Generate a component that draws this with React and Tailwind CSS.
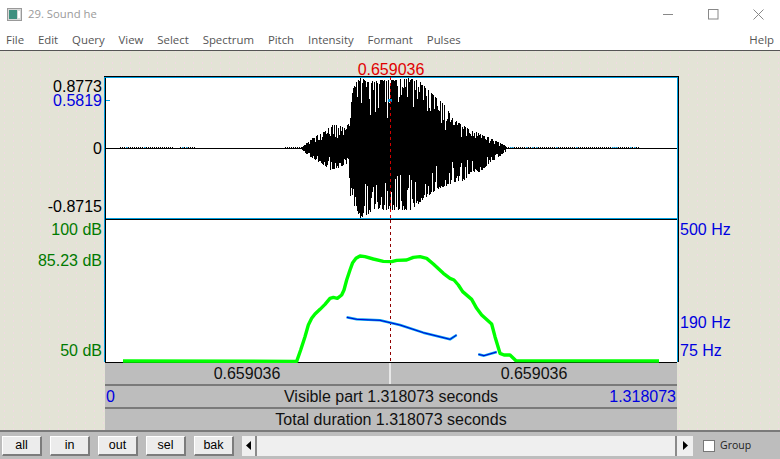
import React from "react";

const env = (pts, x) => {
  for (let i = 1; i < pts.length; i++) {
    if (x <= pts[i][0]) {
      const [a, b] = pts[i - 1], [c, d] = pts[i];
      return b + ((d - b) * (x - a)) / (c - a || 1);
    }
  }
  return 148;
};
const topE = [[105,148],[301,148],[304,145],[310,140],[315,136],[325,131],[333,124],[345,128],[349,122],[351,100],[353,86],[356,82],[361,77],[366,82],[380,80],[395,80],[410,78],[420,82],[432,94],[445,106],[452,118],[460,124],[470,130],[480,134],[490,138],[498,142],[506,146],[677,148]];
const botE = [[105,148],[301,149],[304,152],[310,157],[320,163],[330,170],[340,167],[348,163],[350,196],[355,208],[360,218],[365,216],[375,208],[385,210],[400,210],[410,210],[425,198],[435,190],[445,186],[455,182],[465,180],[470,172],[480,172],[490,162],[500,156],[506,151],[677,149]];
const rnd = (i) => {
  const s = Math.sin(i * 12.9898) * 43758.5453;
  return s - Math.floor(s);
};
let wave = "";
for (let x = 301; x < 506; x++) {
  const t = env(topE, x), b = env(botE, x);
  const r1 = rnd(x), r2 = rnd(x + 99);
  const up = t + (x % 4 === 0 ? 0 : r1 * r1 * r1 * (148 - t) * 0.6);
  const dn = b - (x % 4 === 2 ? 0 : r2 * r2 * r2 * (b - 148) * 0.6);
  wave += `M${x + 0.5} ${Math.min(up, 147.5)}V${Math.max(dn, 149)}`;
}
let noise = "", noiseBlue = "";
const addNoise = (a, b) => {
  for (let x = a; x < b; x += 2) {
    if (rnd(x + 7) < 0.15) noiseBlue += `M${x} 147.5h1.5`;
    else noise += `M${x} 147.5h1`;
  }
};
addNoise(120, 174); addNoise(180, 196); addNoise(285, 302); addNoise(506, 640);

const map = (a) => a.map(([x, y]) => `${280 + x / 3},${240 + y / 3}`).join(" ");
const green = "123,361 " + map([[50,364],[62,330],[75,290],[85,255],[95,235],[105,222],[120,208],[135,193],[150,175],[160,172],[172,175],[185,165],[192,150],[200,120],[210,90],[218,68],[228,55],[240,48],[255,50],[280,57],[310,64],[335,65],[350,61],[380,60],[400,52],[420,50],[440,55],[460,72],[490,100],[510,115],[522,120],[535,135],[548,155],[575,178],[590,205],[605,225],[635,252],[645,290],[660,340],[672,345],[690,345],[708,362]]) + " 659,361";
const p1 = map([[200,232],[230,238],[300,241],[360,255],[430,278],[510,298],[530,285]]);
const p2 = map([[595,343],[612,347],[650,336]]);

const Label = ({ y, right, className, children }) => (
  <span
    style={{ top: y - 6 }}
    className={`absolute h-[14px] leading-[14px] whitespace-nowrap text-[16px] ${right ? "left-[3px]" : "right-[3px]"} ${className}`}
  >
    {children}
  </span>
);

const Row = ({ children, className = "" }) => (
  <div className={`h-[23px] shrink-0 bg-[#bdbdbd] border-b-2 border-[#7a7a7a] flex items-center text-[16px] leading-[18px] text-[#111] ${className}`}>
    {children}
  </div>
);

const Btn = ({ children }) => (
  <button className="w-[40px] h-[20px] bg-[#ececec] border-t border-l border-t-white border-l-white border-b-2 border-r-2 border-b-[#7c7c7c] border-r-[#7c7c7c] text-[12.5px] text-black leading-none flex items-center justify-center">
    {children}
  </button>
);

export default function App() {
  return (
    <div className="w-[780px] h-[459px] overflow-hidden flex flex-col bg-[#e3e3d6] bg-[radial-gradient(circle,#f0dae2_1px,transparent_1px)] bg-[length:9px_6px] font-['Liberation_Sans',sans-serif]">
      <div className="h-[31px] bg-white flex items-center pl-[7px] pr-[16px] pb-[2px] font-['Open_Sans',sans-serif]">
        <svg width="15" height="14" viewBox="0 0 15 14">
          <rect x="0.5" y="0.5" width="14" height="12" fill="#d8d8d8" stroke="#999" />
          <rect x="2" y="2" width="8" height="9" fill="#3f8f7f" />
          <rect x="11" y="3" width="2" height="7" fill="#fff" />
        </svg>
        <span className="ml-[6px] text-[11.3px] text-[#9a9a9a]">29. Sound he</span>
        <div className="ml-auto flex items-center gap-[34px]">
          <svg width="11" height="11" viewBox="0 0 11 11"><path d="M0 5.5H10" stroke="#888" fill="none" /></svg>
          <svg width="11" height="11" viewBox="0 0 11 11"><rect x="0.5" y="0.5" width="9.5" height="9.5" stroke="#888" fill="none" /></svg>
          <svg width="11" height="11" viewBox="0 0 11 11"><path d="M0.5 0.5L10.5 10.5M10.5 0.5L0.5 10.5" stroke="#888" fill="none" /></svg>
        </div>
      </div>
      <div className="h-[20px] bg-white border-b border-[#555] flex items-start pl-[6px] pr-[6px] text-[11.4px] leading-[17px] text-[#555] font-['Open_Sans',sans-serif]">
        <div className="flex gap-[13.9px]">
          {["File", "Edit", "Query", "View", "Select", "Spectrum", "Pitch", "Intensity", "Formant", "Pulses"].map((m) => (
            <span key={m}>{m}</span>
          ))}
        </div>
        <span className="ml-auto">Help</span>
      </div>
      <div className="flex-1 min-h-0 flex">
        <div className="w-[105px] relative -mt-[51px]">
          <Label y={86} className="text-black">0.8773</Label>
          <Label y={100} className="text-[#0000e0]">0.5819</Label>
          <Label y={148} className="text-black">0</Label>
          <Label y={206} className="text-black">-0.8715</Label>
          <Label y={229} className="text-[#007a00]">100 dB</Label>
          <Label y={260} className="text-[#007a00]">85.23 dB</Label>
          <Label y={350} className="text-[#007a00]">50 dB</Label>
        </div>
        <div className="w-[572px] flex flex-col pt-[26px]">
          <div className="relative h-[285px] shrink-0 bg-white">
            <span className="absolute -top-[14px] left-0 right-0 text-center text-[16px] leading-[13px] h-[13px] text-[#e00000]">0.659036</span>
            <svg className="absolute left-0 top-0 overflow-visible" width="572" height="285" viewBox="105 77 572 285">
              <path d="M104 76.5H679M104 219.5H677" stroke="#000" />
              <path d="M105 77.5H677M105 218.5H677" stroke="#00a0e0" />
              <path d="M104.5 77V362M677.5 77V362" stroke="#00a0e0" />
              <path d="M105.5 78V362M678.5 77V362" stroke="#000" />
              <path d="M106 100.5H110" stroke="#00a0e0" />
              <path d={wave} stroke="#000" strokeWidth="1" fill="none" shapeRendering="crispEdges" />
              <path d="M106 148.5H677" stroke="#000" strokeWidth="1" />
              <path d={noise} stroke="#000" />
              <path d={noiseBlue} stroke="#0090d0" />
              <path d="M388 100.5H392" stroke="#0090d0" strokeWidth="3" />
              <path d="M390.5 77V218" stroke="#d00000" strokeDasharray="3 3" />
              <path d="M390.5 220V362" stroke="#900000" strokeDasharray="3 3" />
              <polyline points={green} fill="none" stroke="#00ff00" strokeWidth="3.4" strokeLinejoin="round" />
              <polyline points={p1} fill="none" stroke="#00a0f0" strokeWidth="2.5" strokeLinejoin="round" />
              <polyline points={p1} fill="none" stroke="#0000d0" strokeWidth="1" />
              <polyline points={p2} fill="none" stroke="#00a0f0" strokeWidth="2.5" strokeLinejoin="round" />
              <polyline points={p2} fill="none" stroke="#0000d0" strokeWidth="1" />
            </svg>
          </div>
          <div className="h-[68px] flex flex-col border-t border-black">
            <Row className="h-[22px]">
              <div className="w-1/2 text-center border-r-2 border-r-[#e8e8e8] h-full flex items-center justify-center">0.659036</div>
              <div className="w-1/2 text-center">0.659036</div>
            </Row>
            <Row className="relative justify-center">
              <span className="absolute left-[1px] text-[#0000e0]">0</span>
              <span>Visible part 1.318073 seconds</span>
              <span className="absolute right-[1px] text-[#0000e0]">1.318073</span>
            </Row>
            <Row className="justify-center">Total duration 1.318073 seconds</Row>
          </div>
        </div>
        <div className="flex-1 relative -mt-[51px]">
          <Label y={229} right className="text-[#0000e0]">500 Hz</Label>
          <Label y={322} right className="text-[#0000e0]">190 Hz</Label>
          <Label y={350} right className="text-[#0000e0]">75 Hz</Label>
        </div>
      </div>
      <div className="h-[29px] shrink-0 bg-[#bdbdbd] border-t-2 border-[#7a7a7a] flex items-center pl-[2px]">
        <div className="flex gap-[8px]">
          <Btn>all</Btn>
          <Btn>in</Btn>
          <Btn>out</Btn>
          <Btn>sel</Btn>
          <Btn>bak</Btn>
        </div>
        <div className="ml-[8px] w-[451px] h-[20px] flex bg-[#efefef]">
          <div className="w-[15px] border-r-2 border-[#8a8a8a] flex items-center justify-center">
            <svg width="5" height="9" viewBox="0 0 5 9"><path d="M5 0V9L0 4.5Z" fill="#000" /></svg>
          </div>
          <div className="flex-1" />
          <div className="w-[18px] border-l-2 border-[#8a8a8a] flex items-center justify-center">
            <svg width="5" height="9" viewBox="0 0 5 9"><path d="M0 0V9L5 4.5Z" fill="#000" /></svg>
          </div>
        </div>
        <div className="ml-[10px] w-[12px] h-[12px] bg-white border border-[#777]" />
        <span className="ml-[5px] text-[10.5px] text-[#222] font-['Open_Sans',sans-serif]">Group</span>
      </div>
    </div>
  );
}
